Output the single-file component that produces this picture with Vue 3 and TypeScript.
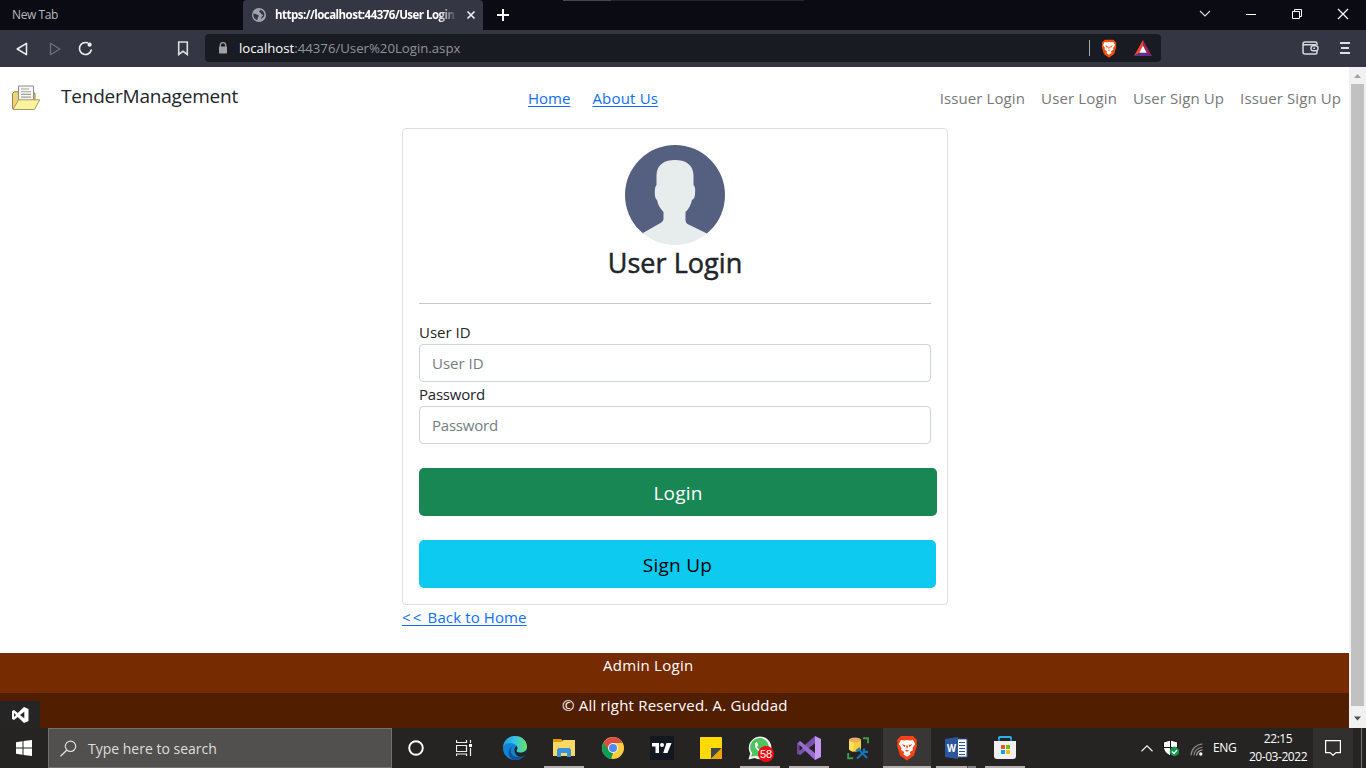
<script setup lang="ts">
interface NavItem { label: string; cls: string }
const accountLinks: NavItem[] = [
  { label: 'Issuer Login', cls: 'issuer-login' },
  { label: 'User Login', cls: 'user-login' },
  { label: 'User Sign Up', cls: 'user-signup' },
  { label: 'Issuer Sign Up', cls: 'issuer-signup' },
]
</script>

<template>
  <div class="screen">
    <header class="tabs">
      <div class="new-tab"><span class="t-newtab">New Tab</span></div>
      <div class="active-tab">
        <svg class="globe" width="14" height="14" viewBox="0 0 14 14"><circle cx="7" cy="7" r="7" fill="#a2a4ad" /><path d="M1.5 5.2C3 5.5 4 6.7 5.6 6.8c1.4.2 1.5 1.5.6 2.2-.8.7-.3 2-1 3C2.300 11.300.9 8.400 1.500 5.200zM6.300 1.300l2.500.2c0 1.300-1.600 1-1.500 2.200.1 1 1.700.6 1.700 1.800.1 1.200 1.600.8 2 1.600.3.600-.6 1.300-1.500 2l-.8 1.900c1.900-.5 3.500-2 3.700-4.400-.1-2.600-2.600-5-5-5.100z" fill="#343644" /></svg>
        <div class="tab-title"><span class="t-tab">https://localhost:44376/User Login</span></div>
        <svg class="tab-close" width="10" height="10" viewBox="0 0 10 10"><path d="M1.500 1.500l7 7M8.500 1.500l-7 7" stroke="#eee" stroke-width="1.700" /></svg>
      </div>
      <svg class="plus" width="12" height="12" viewBox="0 0 12 12"><path d="M6 0v12M0 6h12" stroke="#fff" stroke-width="2" /></svg>
      <div class="edge-line"><i></i></div>
      <div class="window-controls">
        <svg width="12" height="12" viewBox="0 0 12 12"><path d="M1 3l5 5 5-5" fill="none" stroke="#ddd" stroke-width="1.100" /></svg>
        <svg width="12" height="12" viewBox="0 0 12 12"><path d="M1 6.500h10" stroke="#fff" /></svg>
        <svg width="12" height="12" viewBox="0 0 12 12"><path d="M1.500 3.500h7v7h-7zM3.500 3.500v-2h7v7h-2" fill="none" stroke="#fff" /></svg>
        <svg width="12" height="12" viewBox="0 0 12 12"><path d="M1 1l10 10M11 1L1 11" stroke="#fff" stroke-width="1.200" /></svg>
      </div>
    </header>

    <div class="toolbar">
      <svg class="back" width="12" height="14" viewBox="0 0 12 14"><path d="M10.500 1.300v11.400L1.200 7z" fill="none" stroke="#eee" stroke-width="1.500" stroke-linejoin="round" /></svg>
      <svg class="forward" width="12" height="14" viewBox="0 0 12 14"><path d="M1.500 1.300v11.400L10.800 7z" fill="none" stroke="#6d6f7b" stroke-width="1.300" stroke-linejoin="round" /></svg>
      <svg class="reload" width="15" height="15" viewBox="0 0 15 15"><path d="M9.500 1.800A6 6 0 1 0 13.300 9" fill="none" stroke="#eee" stroke-width="1.600" stroke-linecap="round" /><circle cx="11.600" cy="3.700" r="2.100" fill="#eee" /></svg>
      <svg class="bookmark" width="12" height="15" viewBox="0 0 12 15"><path d="M1.700 1h8.600v12.500L6 10.300 1.700 13.500z" fill="none" stroke="#ddd" stroke-width="1.600" /></svg>
      <div class="address">
        <svg class="lock" width="10" height="12" viewBox="0 0 10 12"><path d="M2.300 5V3.400a2.700 2.700 0 0 1 5.400 0V5" fill="none" stroke="#a0a1a5" stroke-width="1.300" /><rect x="1" y="4.500" width="8" height="7" rx=".7" fill="#a0a1a5" /></svg>
        <span class="t-url"><b>localhost</b>:44376/User%20Login.aspx</span>
        <i class="divider"></i>
        <svg class="lion" width="18" height="19" viewBox="0 0 24 26"><path d="M6 1h12l4 4-.5 3.500.5 2-3 10-7 5-7-5-3-10 .5-2L2 5z" fill="#fb4d0a" /><path d="M12 4l3 .6 3-.5 2.200 4.200-2.700 4.200.5 2-3.200 2.200.7 2.300L12 21.500 8.500 19l.7-2.300L6 14.500l.5-2-2.700-4.200L6 4.100l3 .5z" fill="#fff" /><path d="M6.300 8.600l4 1.300-.6 2.300zM17.700 8.600l-4 1.300.6 2.300zM10.300 14.600h3.400L12 16.400zM11 10.500h2l-.5 3h-1z" fill="#fb4d0a" /></svg>
        <svg class="bat" width="18" height="16" viewBox="0 0 18 16"><path d="M9 0L0 16l5.500-3.300L9 6z" fill="#ff4724" /><path d="M9 0l9 16-5.500-3.300L9 6z" fill="#9e1f63" /><path d="M0 16h18l-5.500-3.300h-7z" fill="#662d91" /><path d="M9 5.800l3.700 7H5.300z" fill="#fff" /></svg>
      </div>
      <svg class="wallet" width="17" height="14" viewBox="0 0 17 14"><path d="M15 4V2.500Q15 1 13.500 1H3Q1 1 1 3v8q0 2 2 2h10.500Q15 13 15 11.500V10M1 3.700h13" fill="none" stroke="#d7d8dc" stroke-width="1.500" /><rect x="9" y="4.800" width="7" height="5" rx="2.200" fill="#343644" stroke="#d7d8dc" stroke-width="1.400" /><path d="M11.300 7.300h1.700" stroke="#d7d8dc" stroke-width="1.400" /></svg>
      <svg class="menu" width="10" height="12" viewBox="0 0 10 12"><path d="M0 1h10M1 6h8M0 11h10" stroke="#dfe0e3" stroke-width="1.800" /></svg>
    </div>

    <div class="viewport">
      <main class="page">
        <nav class="navbar">
          <svg class="folder-logo" width="30" height="26" viewBox="0 0 30 26"><path d="M1.500 23.500V8.500l2-1.700h4L9 8h15v15z" fill="#ead47c" stroke="#a5823d" /><path d="M7.500 1h15v18h-15z" fill="#f7f7f5" stroke="#8d8c88" /><path d="M10 4h8M10 6.700h10M10 9.400h10M10 12.100h10" stroke="#a3a19e" stroke-width="1.100" /><path d="M7.500 14.800h21.200L23.500 24.500H2z" fill="#fff39d" stroke="#a99763" stroke-linejoin="round" /></svg>
          <span class="brand">TenderManagement</span>
          <a class="home">Home</a>
          <a class="about">About Us</a>
          <div class="account">
            <a v-for="l in accountLinks" :key="l.label" :class="l.cls">{{ l.label }}</a>
          </div>
        </nav>

        <section class="card">
          <svg class="avatar" width="100" height="100" viewBox="0 0 100 100"><defs><clipPath id="disc"><circle cx="50" cy="50" r="50" /></clipPath></defs><g clip-path="url(#disc)"><path d="M0 0h100v89H0z" fill="#556080" /><path d="M50 15C60 15 68 19 68.500 30V40C70 41 70.500 44 70 49c0 3-1 5-3 6-1.300 5-3 9-6.500 12v8c0 2 1 3.500 3 4.500L82 88.500V100H17V88.500L35.500 78c2-1.200 3-2.500 3-4.500V67C35 63 33 60 32 55c-1.500-1-2.300-4-2.200-7 0-4 .3-6.500 1.700-8V30C32 19 40 15 50 15z" fill="#e7eced" /></g></svg>
          <h3><span>User Login</span></h3>
          <hr />
          <label class="t-id">User ID</label>
          <div class="field"><span class="t-id">User ID</span></div>
          <label class="t-pw">Password</label>
          <div class="field"><span class="t-pw">Password</span></div>
          <button class="login"><span>Login</span></button>
          <button class="signup"><span>Sign Up</span></button>
        </section>
        <a class="back-home"><span class="arrows">&lt;&lt;</span> Back to Home</a>

        <footer>
          <div class="admin"><span>Admin Login</span></div>
          <div class="rights"><span>© All right Reserved. A. Guddad</span></div>
        </footer>
      </main>
      <div class="scrollbar">
        <svg width="17" height="17" viewBox="0 0 17 17"><path d="M5 11h7L8.500 7z" fill="#a3a3a3" /></svg>
        <i></i>
        <svg class="down" width="17" height="17" viewBox="0 0 17 17"><path d="M5 5.500h7l-3.500 4z" fill="#505050" /></svg>
      </div>
      <div class="vs-badge"><svg width="17" height="16" viewBox="0 0 17 16"><path fill-rule="evenodd" d="M12 0l4.500 2v12L12 16l-6.300-6L2 13l-2-1V4l2-1 3.700 3zM12.300 4.800L8 8l4.300 3.200zM2 6v4l2-2z" fill="#fff" /></svg></div>
    </div>

    <div class="taskbar">
      <div class="start"><svg width="16" height="16" viewBox="0 0 16 16"><path d="M0 2.200l6.500-.9v6.200H0zM7.500 1.100L16 0v7.500H7.500zM0 8.500h6.500v6.200L0 13.800zM7.500 8.500H16V16l-8.500-1.100z" fill="#fff" /></svg></div>
      <div class="search"><svg width="17" height="17" viewBox="0 0 17 17"><circle cx="10.500" cy="6.300" r="5.200" fill="none" stroke="#e0e0e0" stroke-width="1.200" /><path d="M6.700 10.200L.5 16.300" stroke="#e0e0e0" stroke-width="1.300" /></svg><span>Type here to search</span></div>
      <div class="tool"><svg width="16" height="16" viewBox="0 0 16 16"><circle cx="8" cy="8" r="6.800" fill="none" stroke="#fff" stroke-width="1.900" /></svg></div>
      <div class="tool taskview"><svg width="17" height="16" viewBox="0 0 17 16"><path d="M.5 0v2.500h10V0M.5 5.500h10v6H.5zM.5 16v-2h10v2M14.500 0v3M14.500 8v8" fill="none" stroke="#eee" stroke-width="1.200" /><path d="M13 4h3v3h-3z" fill="#fff" /></svg></div>
      <div class="apps">
        <div class="app"><svg width="24" height="24" viewBox="0 0 24 24"><defs><linearGradient id="ea"><stop stop-color="#2699d9" /><stop offset=".5" stop-color="#36c3e8" /><stop offset="1" stop-color="#6ce25b" /></linearGradient><linearGradient id="eb" x2="1" y2="1"><stop stop-color="#1580c9" /><stop offset="1" stop-color="#078be0" /></linearGradient></defs><circle cx="12" cy="12" r="12" fill="url(#eb)" /><path d="M0 11C1 4 6 0 12 0c7 0 12 5 12 10.500 0 4-3 6-6.500 6-3 0-4.500-1.200-4-2.200 1.200-1.500 1-3.300-.3-4.700C10 6 3 6 0 11z" fill="url(#ea)" /><path d="M9.300 10.500C6 14 8 21 15 21c3 0 5.500-1 7.200-2.500C20 22 16 24 12 24 5 23 3 14 9.300 10.500z" fill="#135299" /><path d="M13.500 9.800c1.300 1.700 1.200 3.400 0 4.700-.5 1 1 2.200 4 2.200 2.600 0 5.200-1.200 6.200-3.700C24 17 22.800 18.500 20.500 20c-5 2.500-9-1.500-9-5.800 0-1.800.6-3.300 2-4.400z" fill="#252423" /></svg></div>
        <div class="app open"><svg width="22" height="20" viewBox="0 0 22 20"><path d="M0 1h8l2 2v5H0z" fill="#e79a05" /><path d="M0 4h8.500l2-2H22v16H0z" fill="#ffd765" /><path d="M4 18v-6.500L5.500 10h11l1.500 1.500V19h-4v-4H8v4H4z" fill="#3694dc" /></svg></div>
        <div class="app"><svg width="22" height="22" viewBox="0 0 22 22"><circle cx="11" cy="11" r="11" fill="#ffcd40" /><path d="M11 11L6 14 1.500 5.500C6-1.500 17-2 20.600 6H11z" fill="#dc4e41" /><path d="M1.500 5.500L6.700 13.500 11 16l-1.800 6C1 20.500-2 12 1.500 5.500z" fill="#109d58" /><circle cx="11" cy="11" r="5" fill="#f1f1f1" /><circle cx="11" cy="11" r="4" fill="#4c8bf5" /></svg></div>
        <div class="app"><svg width="24" height="24" viewBox="0 0 24 24"><path d="M0 0h24v24H0z" fill="#131722" /><path d="M2 7h7v10H5.500v-6.500H2zM16.500 7H21.500l-4 10h-4.300z" fill="#fff" /><circle cx="12" cy="9" r="2" fill="#fff" /></svg></div>
        <div class="app"><svg width="22" height="22" viewBox="0 0 22 22"><rect width="22" height="22" rx=".7" fill="#ffda00" /><path d="M11 22V11h11z" fill="#40454a" /><path d="M11 22l11-11v11z" fill="#eda600" /></svg></div>
        <div class="app open whatsapp"><svg width="24" height="24" viewBox="0 0 25 25"><path d="M.5 24.500l1.800-6.300A11.800 11.800 0 1 1 7 22.800z" fill="#f4f4f4" /><path d="M3.200 21.700l1.100-4A9.700 9.700 0 1 1 8 20.600z" fill="#4dc55f" /><path d="M8.500 6.200C5 9 9.500 17 15 18.200l3-1.700-.4-1.700-3-1.400-1.600 1.600c-1.800-.8-3-2.200-3.700-3.700l1.300-1.500L9.500 6.200z" fill="#fff" /></svg><span class="badge">58</span></div>
        <div class="app open"><svg width="24" height="24" viewBox="0 0 24 24"><path d="M0 18V7l3-2 3 2.300v9.400L3 19z" fill="#6b4593" /><path d="M3 19L18 7.500V0L1 15z" fill="#7a52ab" /><path d="M3 5l15 12v7L1 8z" fill="#9a6bd0" /><path d="M2.500 9v6l3.300-3z" fill="#252423" /><path d="M18 0l6 3v18l-6 3z" fill="#c397f2" /><path d="M18 7.500v9L12 12z" fill="#252423" /></svg></div>
        <div class="app"><svg class="db" width="22" height="23" viewBox="0 0 22 23"><path d="M2 2.800h12v9.500q-2.500 2.500-6 2.500t-6-2.500z" fill="#f8cf38" /><path d="M2 2.800h4.500v12Q3.500 14.300 2 12.300z" fill="#ffe15a" /><ellipse cx="8" cy="3" rx="6" ry="2.400" fill="#e9ad60" /><path d="M16 1.200h5v5M1.200 16v5.200h5" fill="none" stroke="#419b49" stroke-width="1.900" /><path d="M12.500 13l7.500 8M18 14l-8 7.500" stroke="#1476bd" stroke-width="2" /><path d="M9.200 14.200l3.800-3.200M17 11.500v3.300h4" stroke="#1476bd" stroke-width="2.200" fill="none" /></svg></div>
        <div class="app active"><svg width="24" height="26" viewBox="0 0 24 26"><path d="M6 1h12l4 4-.5 3.500.5 2-3 10-7 5-7-5-3-10 .5-2L2 5z" fill="#fb4216" /><path d="M12 5l3 .4 3-.5 2.200 4.200-2.700 3.800.5 2-3.200 2.200.7 2.300-3.500 2.300-3.500-2.300.7-2.300L6 14.900l.5-2-2.700-3.800L6 4.900l3 .5z" fill="#fff" /><path d="M6.300 8.900l4 1.300-.6 2zM17.700 8.900l-4 1.300.6 2zM10 15h4l-2 2zM11 10.500h2l-.5 3h-1z" fill="#fb4216" /></svg></div>
        <div class="app word"><svg width="23" height="22" viewBox="0 0 23 22"><path d="M11 2h11v18H11z" fill="#fff" stroke="#2b579a" /><path d="M14 5.500h6M14 8.500h6M14 11.500h6M14 14.500h6M14 17.500h6" stroke="#2b579a" /><path d="M0 2L13 0v22L0 20z" fill="#2b579a" /><text x="2.100" y="15" textLength="9" lengthAdjust="spacingAndGlyphs" font-size="11" font-weight="700" fill="#fff">W</text></svg></div>
        <div class="app open"><svg width="24" height="24" viewBox="0 0 24 24"><path d="M6 6V2q0-1 1-1h10q1 0 1 1v4" fill="none" stroke="#22b5e8" stroke-width="2" /><path d="M1 5h22v15q0 3-3 3H4q-3 0-3-3z" fill="#f0f0f0" /><path d="M6 5V3M18 5V3" stroke="#1783c7" stroke-width="2" /><path d="M8 9h4v4H8z" fill="#f25022" /><path d="M13 9h4v4h-4z" fill="#7fba00" /><path d="M8 14h4v4H8z" fill="#00a4ef" /><path d="M13 14h4v4h-4z" fill="#ffb900" /></svg></div>
      </div>
      <div class="tray">
        <svg class="up" width="12" height="7" viewBox="0 0 12 7"><path d="M.5 6.300L6 .9l5.500 5.400" fill="none" stroke="#f0f0f0" stroke-width="1.200" /></svg>
        <svg class="shield" width="16" height="17" viewBox="0 0 16 17"><path d="M7.500 0l7 2v5.500c0 4-4 7-7 8.500-3-1.500-7-4.500-7-8.500V2z" fill="#fff" stroke="#111" /><path d="M7.500 0v16M0 7.500h15" stroke="#111" /><circle cx="11.500" cy="11.500" r="4.700" fill="#139549" /><path d="M9 11.500l2 2 3-3.500" fill="none" stroke="#fff" stroke-width="1.300" /></svg>
        <svg class="wifi" width="13" height="13" viewBox="0 0 13 13"><path d="M1 12.500A12 12 0 0 1 12.500 1M3.800 12.500A9 9 0 0 1 12.500 4.200" fill="none" stroke="#8b8b8b" stroke-width="1.100" /><path d="M6.500 12.500a6 6 0 0 1 6-5.500" fill="none" stroke="#bbb" stroke-width="1.200" /><circle cx="10.800" cy="11" r="1.700" fill="#fff" /></svg>
        <span class="lang">ENG</span>
        <div class="clock"><span class="time">22:15</span><span class="date">20-03-2022</span></div>
        <div class="notice"><svg width="16" height="16" viewBox="0 0 16 16"><path d="M.6.600h14.800v12H11L8 15.300 5 12.600H.6z" fill="none" stroke="#fff" stroke-width="1.200" /></svg></div>
        <i class="desktop"></i>
      </div>
    </div>
  </div>
</template>

<style>
body { margin: 0; overflow: hidden; }
</style>
<style scoped>
* { box-sizing: border-box; }
.screen { width: 1366px; height: 768px; display: flex; flex-direction: column; overflow: hidden; font-family: "Open Sans", "Noto Sans", sans-serif; font-size: 15px; color: #212529; background: #fff; white-space: nowrap; }
svg { display: block; flex: none; }
span, a { white-space: nowrap; }
.tabs { height: 30px; background: #0b0b14; display: flex; align-items: center; font-size: 12px; color: #b8b9bf; }
.new-tab { width: 243px; padding-left: 12px; }
.t-newtab { display: block; letter-spacing: -.4px; margin-top: -2px; }
.active-tab { width: 240px; height: 30px; display: flex; align-items: center; background: #343644; border-radius: 4px 4px 0 0; padding-left: 9px; }
.tab-title { width: 182px; margin-left: 9px; margin-top: -1px; overflow: hidden; color: #fff; font-weight: 700; font-size: 11.500px; mask-image: linear-gradient(90deg, #000 90%, transparent); }
.t-tab { letter-spacing: -.52px; }
.tab-close { margin-left: 9px; }
.plus { margin-left: 14px; }
.edge-line { align-self: flex-start; margin-left: 54px; width: 241px; height: 1px; background: #252525; }
.edge-line i { display: block; width: 48px; height: 1px; background: #484747; }
.window-controls { margin-left: auto; margin-right: 17px; margin-top: -2px; display: flex; gap: 34px; }
.toolbar { height: 37px; background: #343644; display: flex; align-items: center; }
.back { margin-left: 16px; }
.forward { margin-left: 21px; }
.reload { margin-left: 17px; }
.bookmark { margin-left: 84px; }
.address { margin-left: 16px; width: 956px; height: 28px; margin-bottom: 1px; background: #191b22; border-radius: 4px; display: flex; align-items: center; }
.lock { margin-left: 13px; }
.t-url { margin-left: 11px; width: 850px; font-size: 13.200px; color: #92939a; }
.t-url b { color: #fff; font-weight: 400; }
.divider { width: 1px; height: 16px; background: #a8a9ad; flex: none; }
.lion { margin-left: 10px; }
.bat { margin-left: 16px; }
.wallet { margin-left: 141px; margin-top: -1px; }
.menu { margin-left: 21px; margin-top: -1px; }
.viewport { height: 661px; display: flex; position: relative; }
.page { width: 1349px; display: flex; flex-direction: column; }
.navbar { height: 61px; display: flex; align-items: center; font-size: 15px; }
.folder-logo { margin-left: 11px; }
.brand { width: 467px; margin-left: 20px; margin-top: -4px; font-size: 19px; letter-spacing: -.21px; }
.home, .about, .back-home { color: #0d6efd; text-decoration: underline; text-underline-offset: 2px; text-decoration-thickness: 1px; }
.home { display: block; margin-right: 22px; }
.about { letter-spacing: .2px; }
.account { display: flex; gap: 16px; margin-left: auto; margin-right: 8px; color: #777; }
.issuer-login, .user-signup, .issuer-signup { letter-spacing: .1px; }
.user-login { letter-spacing: .14px; }
.card { width: 546px; height: 477px; margin-left: 402px; border: 1px solid #dfdfdf; border-radius: 4px; padding: 16px; display: flex; flex-direction: column; }
.avatar { align-self: center; }
h3 { margin: 0; height: 38px; line-height: 35px; text-align: center; font-weight: 400; font-size: 27px; letter-spacing: .05px; -webkit-text-stroke: .5px #212529; }
hr { width: 100%; height: 1px; border: 0; background: #c8c9ca; margin: 20px 0 16px; flex: none; }
label { height: 24px; line-height: 25px; flex: none; }
.t-pw { letter-spacing: -.22px; }
.field { height: 38px; border: 1px solid #ced4da; border-radius: 4px; padding-left: 12px; line-height: 37px; color: #757d84; flex: none; }
button { border: 0; border-radius: 5px; height: 48px; padding: 0; font: inherit; font-size: 19px; line-height: 48px; margin-top: 24px; flex: none; }
button span { display: block; padding-top: 1px; height: 48px; }
.login { width: 518px; background: #198754; color: #fff; letter-spacing: .2px; }
.signup { width: 517px; background: #0dcaf0; color: #000; letter-spacing: .25px; }
.back-home { margin-left: 402px; height: 24px; line-height: 25px; align-self: flex-start; }
.arrows { letter-spacing: 2.200px; }
.back-home { letter-spacing: .12px; }
footer { margin-top: 24px; color: #fff; }
.admin { height: 40px; background: #772b00; padding-left: 603px; line-height: 25px; letter-spacing: .28px; }
.rights { height: 35px; background: #521e00; padding-left: 562px; line-height: 25px; letter-spacing: .2px; }
.scrollbar { width: 17px; background: #f1f1f1; display: flex; flex-direction: column; }
.scrollbar i { width: 13px; height: 622px; margin-left: 2px; background: #c1c1c1; }
.scrollbar .down { margin-top: 5px; }
.vs-badge { position: absolute; left: 0; bottom: 0; width: 40px; height: 27px; background: #252526; display: flex; align-items: center; justify-content: center; }
.taskbar { height: 40px; background: #252423; display: flex; }
.start, .tool { width: 48px; display: flex; align-items: center; justify-content: center; }
.search { width: 344px; background: #51504e; border: 1px solid #73716f; display: flex; align-items: center; padding-left: 11px; color: #dededd; font-size: 14px; }
.search span { margin-left: 11px; }
.apps { display: flex; gap: 1px; margin-left: 3px; }
.app { width: 48px; height: 40px; position: relative; display: flex; align-items: center; justify-content: center; }
.open::after, .word::after { content: ""; position: absolute; left: 4px; bottom: 0; width: 40px; height: 2px; background: #b2afad; }
.word::after { background: linear-gradient(90deg, #b2afad 31px, #4c4b4a 31px 32px, #83817f 32px); }
.active { background: #383736; }
.active::after { content: ""; position: absolute; left: 0; bottom: 0; width: 48px; height: 2px; background: #b2afad; }
.badge { position: absolute; left: 22px; top: 18px; width: 16px; height: 16px; border-radius: 8px; background: #f10b10; color: #fff; font: 11px/16px "Liberation Sans", sans-serif; text-align: center; }
.tray { margin-left: auto; display: flex; align-items: center; color: #fff; font-size: 12px; }
.shield { margin-left: 10px; }
.wifi { margin-left: 11px; margin-top: 3px; }
.lang { width: 24px; margin-left: 10px; margin-top: -1px; letter-spacing: -.4px; }
.clock { width: 60px; margin-left: 11px; display: flex; flex-direction: column; align-items: center; line-height: 18px; letter-spacing: -.45px; }
.notice { width: 40px; height: 40px; margin-left: 5px; background: #31302f; display: flex; align-items: center; justify-content: center; }
.desktop { width: 1px; height: 40px; margin-left: 8px; margin-right: 4px; background: #777; }
</style>
